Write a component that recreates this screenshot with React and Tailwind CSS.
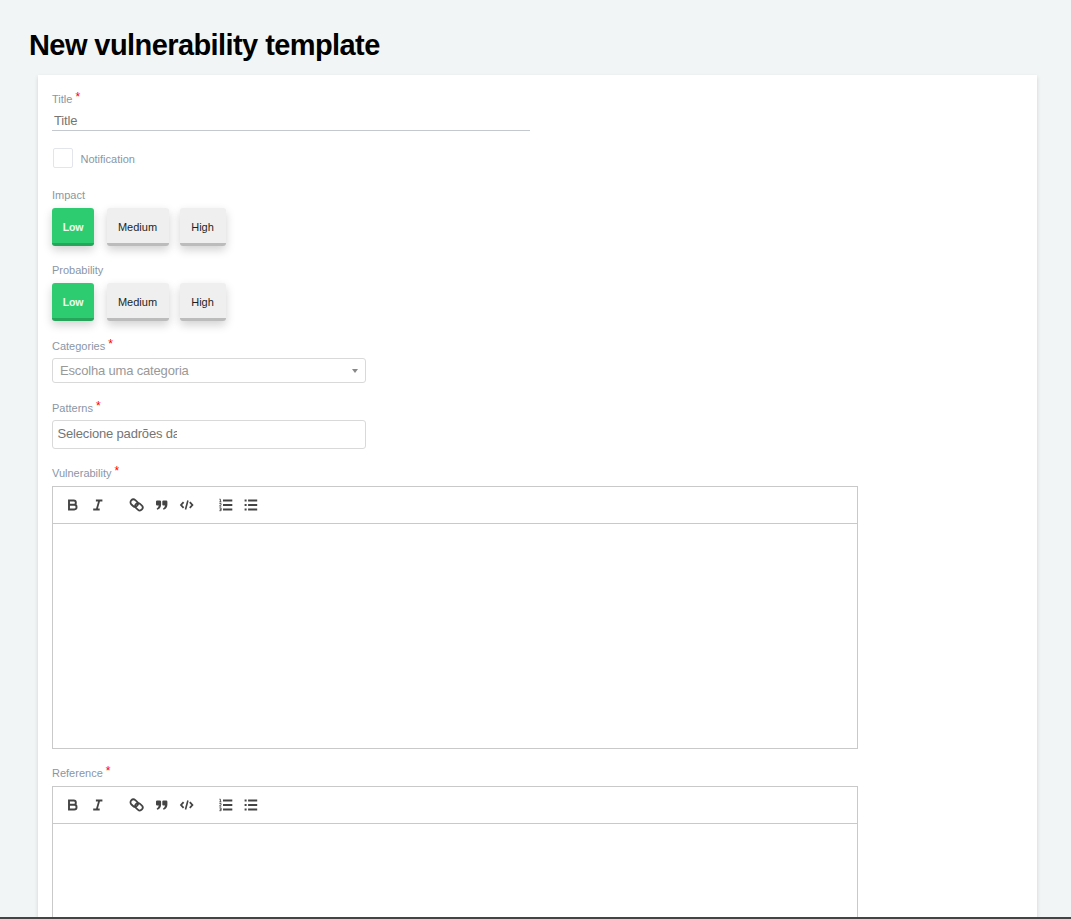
const label = 'text-[11px] leading-[14px] text-[#8a96a6]';

function Label({ children, required }) {
  return (
    <div className={`flex h-[14px] gap-[3px] ${label}`}>
      <span>{children}</span>
      {required && <span className="-mt-[2px] text-[12px] text-[#ff0000]">*</span>}
    </div>
  );
}

function Level({ children, active, width }) {
  return (
    <button
      className={
        active
          ? `${width} h-[38px] rounded-[3px] border-b-[3px] border-[#27a55a] bg-[#2ecc71] pt-[4px] text-[10.5px] font-bold tracking-[-0.2px] text-[#eafff2] shadow-[0_4px_10px_rgba(0,0,0,0.18)]`
          : `${width} h-[38px] rounded-[3px] border-b-[3px] border-[#bcbcbc] bg-[#efefef] pt-[4px] text-[11px] text-[#1c1f26] shadow-[0_4px_10px_rgba(0,0,0,0.18)]`
      }
    >
      {children}
    </button>
  );
}

function Levels() {
  return (
    <div className="mt-[6px] flex h-[38px]">
      <Level active width="w-[42px]">Low</Level>
      <div className="ml-[12.5px] flex gap-[11px]">
        <Level width="w-[62px]">Medium</Level>
        <Level width="w-[46px]">High</Level>
      </div>
    </div>
  );
}

function Icon({ children }) {
  return (
    <button className="flex h-[24px] w-[25px] items-center justify-center">
      <svg width="15" height="15" viewBox="0 0.5 15 15" fill="none" stroke="#444" strokeWidth="1.8">
        {children}
      </svg>
    </button>
  );
}

function Toolbar() {
  return (
    <div className="flex h-[37px] items-start border-b border-[#c9c9c9] pt-[6px] pl-[7px]">
      <Icon>
        <path strokeWidth="1.9" d="M4 3h4.7a2 2 0 0 1 0 4.3H4zM4 7.3h5.2a2.2 2.2 0 0 1 0 4.7H4z" />
      </Icon>
      <Icon>
        <path strokeWidth="1.8" d="M5.9 3h6.5M3.2 12h6.5M9.3 3 6.7 12" />
      </Icon>
      <div className="w-[14px]" />
      <Icon>
        <g transform="rotate(42 7.5 7.5)" strokeWidth="1.8">
          <rect x="0.5" y="4.7" width="8" height="5.8" rx="2.9" />
          <rect x="6.5" y="4.3" width="8" height="5.8" rx="2.9" />
        </g>
      </Icon>
      <Icon>
        <path
          fill="#444"
          stroke="none"
          d="M3.1 2.9h2.7q1.3 0 1.3 1.3v2.7q0 3.7-3.7 5.4l-.8-1.1q1.9-1.1 2.2-3.2H3.1q-1.1 0-1.1-1.1V4q0-1.1 1.1-1.1zM9.4 2.9h2.7q1.3 0 1.3 1.3v2.7q0 3.7-3.7 5.4l-.8-1.1q1.9-1.1 2.2-3.2H9.4q-1.1 0-1.1-1.1V4q0-1.1 1.1-1.1z"
        />
      </Icon>
      <Icon>
        <path strokeWidth="1.8" d="M4.6 4.6 2 7.5l2.6 2.9M10.8 4.6l2.6 2.9-2.6 2.9" />
        <path strokeWidth="1.6" d="M8.9 3 6.5 12" />
      </Icon>
      <div className="w-[14px]" />
      <Icon>
        <path strokeWidth="1.8" d="M5 3h9.3M5 7.5h9.3M5 12h9.3" />
        <path
          strokeWidth="0.9"
          d="M1.4 1.7h1v2.7M1.4 4.4h2M1.4 6.1h1.7v.9L1.5 8.6h1.8M1.4 10.4h1.7v2.8H1.4M1.8 11.8h1.3"
        />
      </Icon>
      <Icon>
        <path strokeWidth="1.8" d="M5.1 3h9.1M5.1 7.5h9.1M5.1 12h9.1M1.6 3h2M1.6 7.5h2M1.6 12h2" />
      </Icon>
    </div>
  );
}

function Editor() {
  return (
    <div className="mt-[6px] h-[263px] w-[806px] shrink-0 border border-[#c9c9c9]">
      <Toolbar />
    </div>
  );
}

export default function App() {
  return (
    <div className="flex h-[919px] w-[1071px] flex-col overflow-hidden bg-[#f1f5f6] font-['Liberation_Sans',Arial,sans-serif]">
      <h1 className="h-[75px] shrink-0 pl-[29px] pt-[28px] text-[29px] leading-[34px] font-bold tracking-[-0.58px] text-black">
        New vulnerability template
      </h1>
      <main className="ml-[38px] flex h-[842px] w-[999px] shrink-0 flex-col overflow-hidden bg-white pl-[14px] pt-[17px] shadow-[0_2px_4px_rgba(0,0,0,0.14)]">
        <Label required>Title</Label>
        <input
          placeholder="Title"
          className="mt-[4px] h-[21px] w-[478px] shrink-0 border-b border-[#c4c9d0] pl-[2px] text-[13px] tracking-[-0.17px] placeholder:text-[#757575]"
        />
        <label className="mt-[17px] flex h-[20px] items-center gap-[7.5px] pl-px">
          <span className="h-[20px] w-[20px] rounded-[2px] border border-[#e2e6ec] bg-white" />
          <span className={`${label} pt-[2px]`}>Notification</span>
        </label>
        <div className="mt-[20px]">
          <Label>Impact</Label>
          <Levels />
        </div>
        <div className="mt-[17px]">
          <Label>Probability</Label>
          <Levels />
        </div>
        <div className="mt-[18px]">
          <Label required>Categories</Label>
          <div className="mt-[5px] flex h-[25px] w-[314px] items-center justify-between rounded-[3px] border border-[#d9d9d9] pr-[7px] pl-[7px] text-[13px] tracking-[-0.17px] text-[#999]">
            <span>Escolha uma categoria</span>
            <svg width="6" height="4" viewBox="0 0 6 4" fill="#888">
              <path d="M0 0h6L3 4z" />
            </svg>
          </div>
        </div>
        <div className="mt-[18px]">
          <Label required>Patterns</Label>
          <div className="mt-[5px] h-[29px] w-[314px] rounded-[3px] border border-[#d9d9d9] pt-[4px] pl-[4.5px]">
            <div className="w-[119.5px] overflow-hidden text-[13px] leading-[18px] tracking-[-0.17px] whitespace-nowrap text-[#757575]">
              Selecione padrões da
            </div>
          </div>
        </div>
        <div className="mt-[17px]">
          <Label required>Vulnerability</Label>
          <Editor />
        </div>
        <div className="mt-[17px]">
          <Label required>Reference</Label>
          <Editor />
        </div>
      </main>
      <div className="z-10 h-[2px] shrink-0 bg-[#444]" />
    </div>
  );
}
